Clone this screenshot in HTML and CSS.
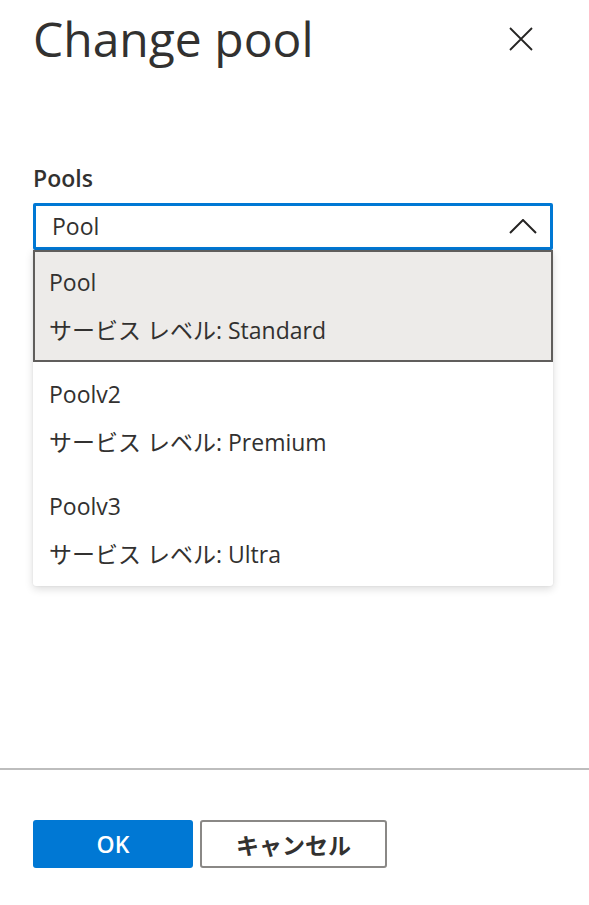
FILE: index.html
```html
<!DOCTYPE html>
<html lang="ja">
  <head>
    <meta charset="UTF-8" />
    <meta name="viewport" content="width=device-width, initial-scale=1.0" />
    <title>Change pool</title>
    <link rel="stylesheet" href="styles.css">
  </head>
  <body>
    <div class="panel">
      <div class="panel-main">
        <div class="panel-header">
          <h1>Change pool</h1>
          <button class="close-btn" aria-label="Close">
            <svg width="24" height="24" viewBox="0 0 24 24">
              <path d="M1 1 L23 23 M23 1 L1 23" stroke="#252423" stroke-width="1.8" fill="none" />
            </svg>
          </button>
        </div>

        <label class="field-label" for="poolSelect">Pools</label>
        <div class="dropdown">
          <div class="dropdown-field" id="poolSelect">
            <span>Pool</span>
            <svg class="chevron" width="28" height="15" viewBox="0 0 28 15">
              <path d="M1 14 L14 1 L27 14" stroke="#252423" stroke-width="2" fill="none" />
            </svg>
          </div>
          <ul class="dropdown-list">
            <li class="option selected">
              <div>Pool</div>
              <div>サービス レベル: Standard</div>
            </li>
            <li class="option">
              <div>Poolv2</div>
              <div>サービス レベル: Premium</div>
            </li>
            <li class="option">
              <div>Poolv3</div>
              <div>サービス レベル: Ultra</div>
            </li>
          </ul>
        </div>
      </div>

      <div class="panel-footer">
        <button class="btn btn-primary">OK</button>
        <button class="btn btn-default">キャンセル</button>
      </div>
    </div>
  </body>
</html>
```

FILE: styles.css
```css
body {
  font-family: "Open Sans", "Noto Sans CJK JP", sans-serif;
  margin: 0;
  padding: 0;
  background-color: #fff;
  color: #323130;
}
.panel {
  display: flex;
  flex-direction: column;
  height: 905px;
}
.panel-main {
  flex: 1;
  padding: 11px 36px 0 33px;
}
.panel-header {
  display: flex;
  align-items: center;
  justify-content: space-between;
}
h1 {
  margin: 0;
  font-size: 48px;
  font-weight: 400;
  line-height: 56px;
  color: #323130;
}
.close-btn {
  width: 40px;
  height: 40px;
  margin-right: 12px;
  padding: 0;
  border: none;
  background: none;
  display: flex;
  align-items: center;
  justify-content: center;
}
.field-label {
  display: block;
  margin-top: 95px;
  margin-bottom: 9px;
  font-size: 23px;
  font-weight: 600;
  line-height: 32px;
}
.dropdown {
  position: relative;
}
.dropdown-field {
  box-sizing: border-box;
  height: 47px;
  border: 3px solid #0078d4;
  border-radius: 2px;
  padding: 0 13px 0 16px;
  display: flex;
  align-items: center;
  justify-content: space-between;
  font-size: 23px;
  line-height: 41px;
}
.dropdown-list {
  position: absolute;
  top: 100%;
  left: 0;
  right: 0;
  margin: 0;
  padding: 0;
  list-style: none;
  background-color: #fff;
  border-radius: 0 0 3px 3px;
  box-shadow: 0 3px 9px rgba(0, 0, 0, 0.14), 0 0 2px rgba(0, 0, 0, 0.08);
}
.option {
  box-sizing: border-box;
  height: 112px;
  padding: 8px 16px;
  font-size: 23px;
  line-height: 48px;
  color: #323130;
}
.option.selected {
  background-color: #edebe9;
  border: 2px solid #605e5c;
  padding: 6px 14px;
}
.panel-footer {
  border-top: 2px solid #bdbdbd;
  height: 137px;
  box-sizing: border-box;
  padding: 50px 33px 0;
  display: flex;
  align-items: flex-start;
  gap: 7px;
}
.btn {
  box-sizing: border-box;
  height: 48px;
  border-radius: 3px;
  font-family: "Open Sans", "Noto Sans CJK JP", sans-serif;
  font-size: 23px;
  font-weight: 600;
  cursor: pointer;
}
.btn-primary {
  width: 160px;
  background-color: #0078d4;
  color: #fff;
  border: none;
}
.btn-default {
  width: 187px;
  background-color: #fff;
  color: #323130;
  border: 2px solid #8a8886;
}
```
